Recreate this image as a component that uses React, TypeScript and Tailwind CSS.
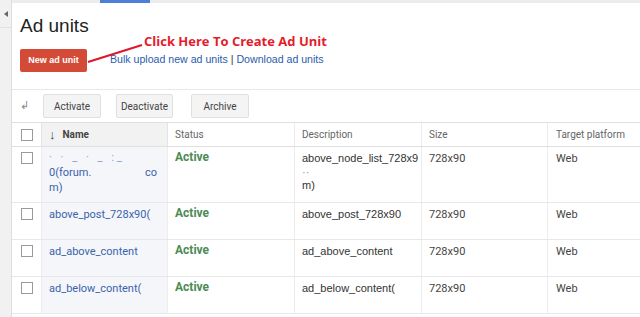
import React from 'react';

type Row = {
  name: React.ReactNode;
  desc: React.ReactNode;
  h: string;
};

const rows: Row[] = [
  {
    h: 'h-[56px]',
    name: (
      <>
        <span className="block text-[#8aa0c8] tracking-[3px] leading-[14px]">· · _ · _ :_</span>
        <span className="flex justify-between">
          <span>0(forum.</span>
          <span>co</span>
        </span>
        <span className="block">m)</span>
      </>
    ),
    desc: (
      <>
        <span className="block">above_node_list_728x9</span>
        <span className="block text-[#999] leading-[12px]">·· </span>
        <span className="block">m)</span>
      </>
    ),
  },
  {
    h: 'h-[37px]',
    name: <span>above_post_728x90(</span>,
    desc: <span>above_post_728x90</span>,
  },
  {
    h: 'h-[37px]',
    name: <span>ad_above_content</span>,
    desc: <span>ad_above_content</span>,
  },
  {
    h: 'h-[37px]',
    name: <span>ad_below_content(</span>,
    desc: <span>ad_below_content(</span>,
  },
];

function Checkbox() {
  return <div className="w-[12px] h-[12px] border border-[#9a9a9a] bg-white" />;
}

export default function App() {
  return (
    <div className="w-[640px] h-[317px] overflow-hidden bg-white flex font-['Liberation_Sans',Arial,sans-serif]">
      {/* Left rail */}
      <div className="w-[12px] shrink-0 bg-[#f1f1f1] border-r border-[#dedede] flex flex-col">
        <div className="h-[28px] flex items-center justify-center border-b border-[#e2e2e2]">
          <div className="w-0 h-0 border-y-[3px] border-y-transparent border-r-[4px] border-r-[#666]" />
        </div>
      </div>

      <div className="flex-1 flex flex-col">
        {/* top bar */}
        <div className="h-[3px] bg-[#ececec] flex">
          <div className="w-[88px]" />
          <div className="w-[50px] bg-[#4d7fd8]" />
        </div>

        {/* header area */}
        <div className="relative pl-[8px] h-[86px]">
          <h1 className="pt-[12px] text-[19px] leading-[22px] text-[#222]">Ad units</h1>
          <div className="flex items-center mt-[12px]">
            <button className="w-[67px] h-[23px] rounded-[2px] bg-[#d34b36] text-white text-[9px] font-bold">
              New ad unit
            </button>
            <div className="ml-[23px] text-[10.6px] text-[#2a5cad] mt-[-2px]">
              Bulk upload new ad units <span className="text-[#333]">|</span> Download ad units
            </div>
          </div>
          <div className="absolute left-[132px] top-[29px] text-[13px] font-bold text-[#e31c2c] font-['Open_Sans',sans-serif]">
            Click Here To Create Ad Unit
          </div>
          <svg className="absolute left-[74px] top-[36px]" width="60" height="26" viewBox="0 0 60 26">
            <line x1="2" y1="23" x2="56" y2="6" stroke="#e0162a" strokeWidth="2" />
          </svg>
        </div>

        {/* toolbar */}
        <div className="h-[33px] border-t border-[#e8e8e8] flex items-center gap-[15px] font-['Roboto',sans-serif] text-[10px] text-[#444]">
          <div className="w-[24px] text-center text-[#888] text-[11px]">↲</div>
          <button className="w-[58px] h-[24px] bg-[#f4f4f4] border border-[#e0e0e0] rounded-[2px] -ml-[8px]">
            Activate
          </button>
          <button className="w-[57px] h-[24px] bg-[#f4f4f4] border border-[#e0e0e0] rounded-[2px]">
            Deactivate
          </button>
          <button className="w-[58px] h-[24px] bg-[#f4f4f4] border border-[#e0e0e0] rounded-[2px] ml-[3px]">
            Archive
          </button>
        </div>

        {/* table */}
        <div className="font-['Roboto',sans-serif]">
          <div className="flex h-[25px] border-y border-[#e0e0e0] text-[10px] text-[#666] items-center">
            <div className="w-[29px] h-full flex items-center justify-center">
              <Checkbox />
            </div>
            <div className="w-[127px] h-full bg-[#f2f2f2] border-x border-[#e4e4e4] flex items-center pl-[7px] gap-[7px] text-[#444] font-bold">
              <span className="text-[13px] leading-none font-black">↓</span> Name
            </div>
            <div className="w-[127px] h-full flex items-center pl-[7px] border-r border-[#ececec]">Status</div>
            <div className="w-[127px] h-full flex items-center pl-[7px] border-r border-[#ececec]">Description</div>
            <div className="w-[126px] h-full flex items-center pl-[7px] border-r border-[#ececec]">Size</div>
            <div className="flex-1 h-full flex items-center pl-[8px]">Target platform</div>
          </div>
          {rows.map((r, i) => (
            <div key={i} className={`flex ${r.h} border-b border-[#e8e8e8] text-[11px] leading-[15px]`}>
              <div className="w-[29px] flex justify-center pt-[5px]">
                <Checkbox />
              </div>
              <div className="w-[127px] bg-[#f4f6f9] border-x border-[#ececec] pl-[7px] pr-[10px] pt-[4px] text-[#3a63ad]">
                {r.name}
              </div>
              <div className="w-[127px] pl-[7px] pt-[3px] border-r border-[#ececec] text-[#4b8b55] font-bold text-[12px]">
                Active
              </div>
              <div className="w-[127px] pl-[7px] pt-[4px] border-r border-[#ececec] text-[#333] font-['Liberation_Sans',Arial,sans-serif]">
                {r.desc}
              </div>
              <div className="w-[126px] pl-[7px] pt-[4px] border-r border-[#ececec] text-[#444]">728x90</div>
              <div className="flex-1 pl-[8px] pt-[4px] text-[#444]">Web</div>
            </div>
          ))}
        </div>
      </div>
    </div>
  );
}
